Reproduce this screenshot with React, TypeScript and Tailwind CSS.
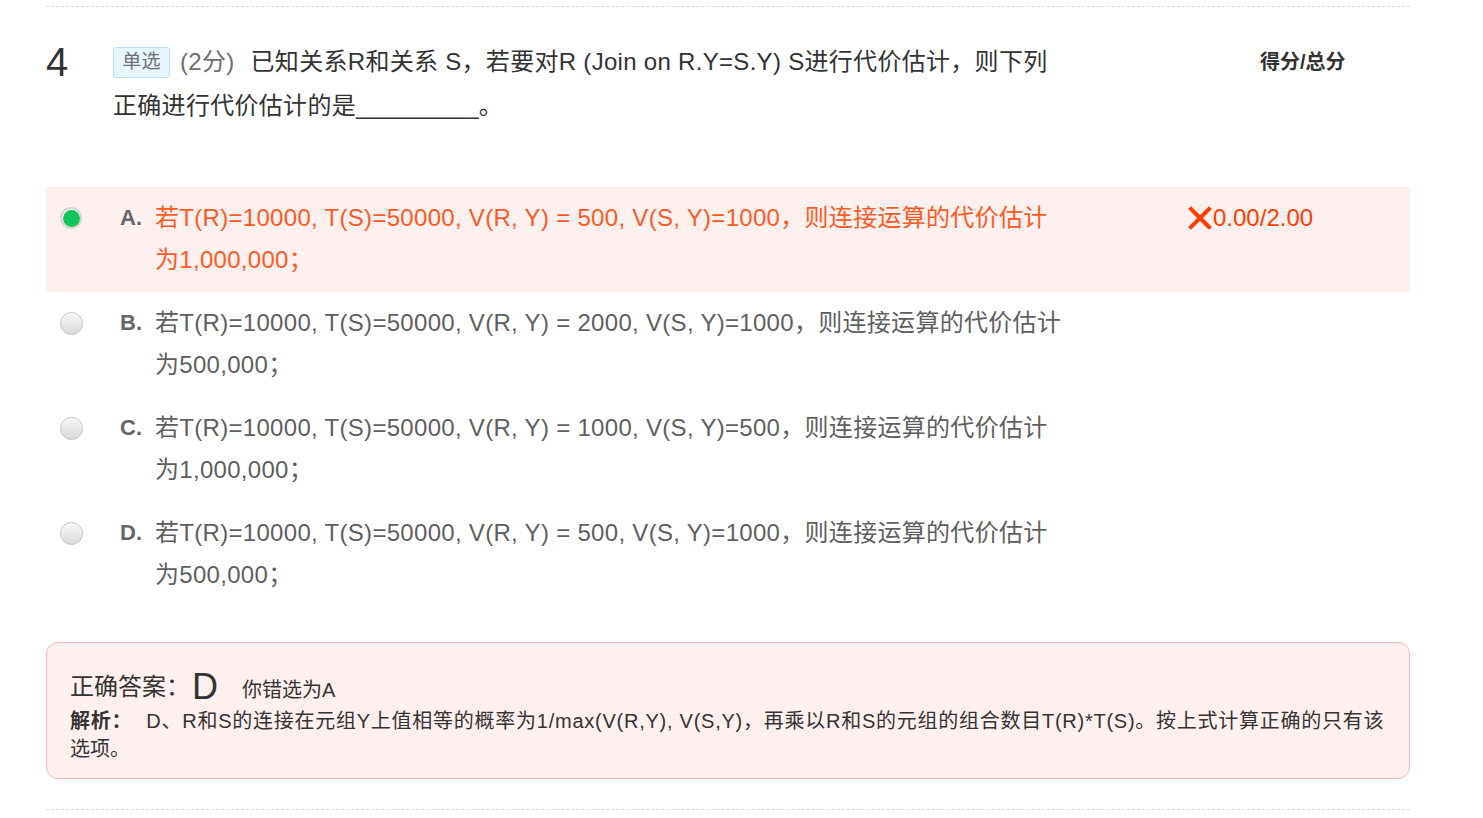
const font = "font-['Liberation_Sans','Noto_Sans_CJK_SC',sans-serif]";

type Opt = { key: string; lines: [string, string]; picked?: boolean };

const options: Opt[] = [
  {
    key: "A",
    lines: ["若T(R)=10000, T(S)=50000, V(R, Y) = 500, V(S, Y)=1000，则连接运算的代价估计", "为1,000,000；"],
    picked: true,
  },
  {
    key: "B",
    lines: ["若T(R)=10000, T(S)=50000, V(R, Y) = 2000, V(S, Y)=1000，则连接运算的代价估计", "为500,000；"],
  },
  {
    key: "C",
    lines: ["若T(R)=10000, T(S)=50000, V(R, Y) = 1000, V(S, Y)=500，则连接运算的代价估计", "为1,000,000；"],
  },
  {
    key: "D",
    lines: ["若T(R)=10000, T(S)=50000, V(R, Y) = 500, V(S, Y)=1000，则连接运算的代价估计", "为500,000；"],
  },
];

function Radio({ on }: { on?: boolean }) {
  if (on) {
    return (
      <span className="flex h-[22px] w-[22px] items-center justify-center rounded-full border-2 border-[#d4d4d4] bg-white">
        <span className="h-[17px] w-[17px] rounded-full bg-[#12c455]" />
      </span>
    );
  }
  return (
    <span className="block h-[23px] w-[23px] rounded-full border border-[#c2c2c2] bg-gradient-to-b from-[#f6f6f6] to-[#dadada] shadow-[inset_0_1px_1px_#fff]" />
  );
}

function Cross() {
  return (
    <svg width="24" height="24" viewBox="0 0 24 24" className="mr-[1px]">
      <path d="M3 3L21 21M21 3L3 21" stroke="#ff3d00" strokeWidth="4" strokeLinecap="square" />
    </svg>
  );
}

function Option({ o }: { o: Opt }) {
  const color = o.picked ? "text-[#ff5a1f]" : "text-[#5f5f5f]";
  return (
    <div className={`flex pt-[10px] pb-[11px] ${o.picked ? "bg-[#fff0f0]" : ""}`}>
      <div className="flex h-[42px] w-[74px] items-center pl-[14px]">
        <Radio on={o.picked} />
      </div>
      <div className="w-[35px] text-[22px] leading-[42px] font-bold text-[#666]">{o.key}.</div>
      <div className={`w-[1033px] text-[24px] leading-[42px] tracking-[0.3px] ${color}`}>
        <div className="whitespace-nowrap">{o.lines[0]}</div>
        <div className="whitespace-nowrap">{o.lines[1]}</div>
      </div>
      {o.picked && (
        <div className="flex h-[42px] items-center text-[24px] text-[#ff3d00]">
          <Cross />
          <span>0.00/2.00</span>
        </div>
      )}
    </div>
  );
}

export default function App() {
  return (
    <div className={`${font} bg-white min-h-screen pl-[46px] pt-[6px]`}>
      <div className="w-[1364px]">
        <div className="border-t border-dashed border-[#dcdcdc]" />

        <div className="flex pt-[33px]">
          <div className="w-[67px] text-[40px] leading-[44px] text-[#333]">4</div>
          <div className="w-[1147px] text-[24px] leading-[44px] tracking-[0.3px] text-[#333]">
            <div className="flex items-center whitespace-nowrap">
              <span className="mr-[10px] inline-flex h-[31px] w-[57px] items-center justify-center rounded-[3px] border border-[#b9def5] bg-[#e6f5ff] text-[19px] text-[#707070]">
                单选
              </span>
              <span className="mr-[16px] text-[#6f6f6f]">(2分)</span>
              <span>已知关系R和关系 S，若要对R (Join on R.Y=S.Y) S进行代价估计，则下列</span>
            </div>
            <div className="whitespace-nowrap">正确进行代价估计的是_________。</div>
          </div>
          <div className="text-[20px] leading-[44px] font-bold text-[#333]">得分/总分</div>
        </div>

        <div className="mt-[59px]">
          {options.map((o) => (
            <Option key={o.key} o={o} />
          ))}
        </div>

        <div className="mt-[35px] rounded-[12px] border border-[#f5b8b8] bg-[#fff0f0] px-[23px] pt-[23px] pb-[15px] text-[#333]">
          <div className="flex h-[41px] items-center">
            <span className="text-[24px]">正确答案：</span>
            <span className="ml-[2px] text-[36px] leading-[40px]">D</span>
            <span className="ml-[24px] mt-[6px] text-[20px]">你错选为A</span>
          </div>
          <div className="text-[20px] leading-[28px]">
            <div className="whitespace-nowrap tracking-[0.75px]">
              <span className="font-bold">解析：</span>
              <span className="ml-[14px]">
                D、R和S的连接在元组Y上值相等的概率为1/max(V(R,Y), V(S,Y)，再乘以R和S的元组的组合数目T(R)*T(S)。按上式计算正确的只有该
              </span>
            </div>
            <div>选项。</div>
          </div>
        </div>

        <div className="mt-[30px] border-t border-dashed border-[#dcdcdc]" />
      </div>
    </div>
  );
}
